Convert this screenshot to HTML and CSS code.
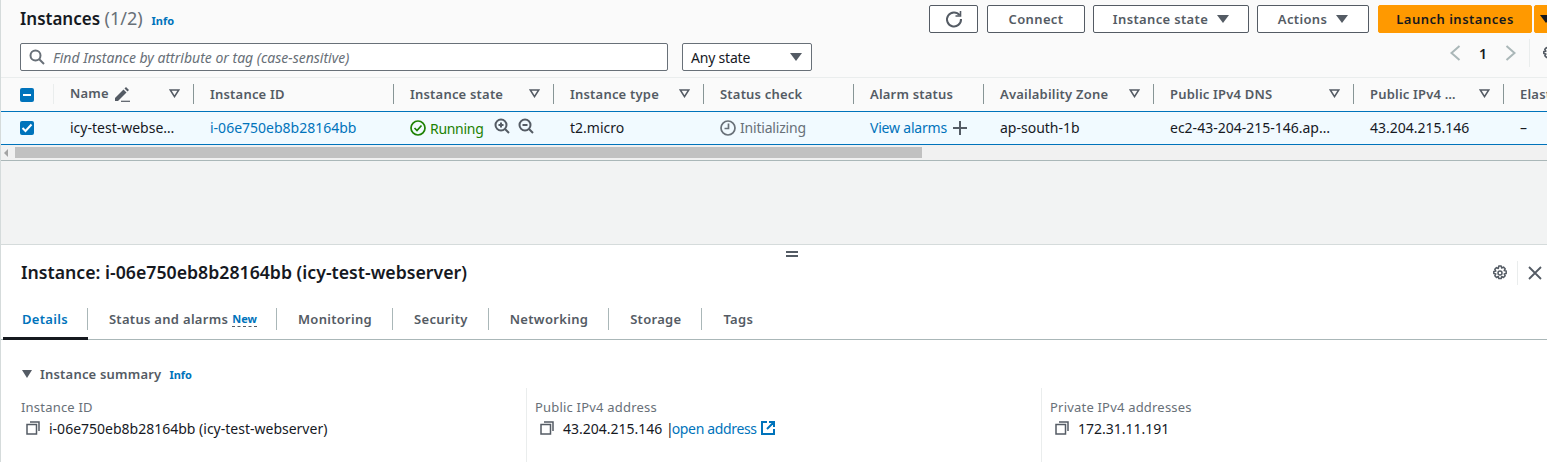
FILE: index.html
```html
<!DOCTYPE html>
<html>
<head>
<meta charset="UTF-8">
<title>Instances</title>
<link rel="stylesheet" href="styles.css">
</head>
<body>
<div class="top">
	<div class="toolbar">
		<div class="heading">
			<h1>Instances <span class="count">(1/2)</span></h1>
			<a class="info">Info</a>
		</div>
		<div class="actions">
			<button class="btn btn-refresh"><svg width="20" height="20" viewBox="0 0 20 20" fill="none" stroke="#545b64" stroke-width="2"><path d="M15.6 6.2A7 7 0 1 0 17 10"/><path d="M16.5 2v5h-5" stroke-width="1.6"/></svg></button>
			<button class="btn btn-connect">Connect</button>
			<button class="btn btn-state">Instance state <span class="caret"></span></button>
			<button class="btn btn-actions">Actions <span class="caret"></span></button>
			<button class="btn btn-launch">Launch instances</button>
			<button class="btn btn-launch-more"><span class="caret caret-dark"></span></button>
		</div>
	</div>
	<div class="filters">
		<div class="search">
			<svg width="16" height="16" viewBox="0 0 16 16" fill="none" stroke="#687078" stroke-width="2"><circle cx="6.5" cy="6.5" r="5"/><path d="M10 10l5 5"/></svg>
			<span>Find Instance by attribute or tag (case-sensitive)</span>
		</div>
		<div class="select"><span class="select-text">Any state</span> <span class="caret"></span></div>
		<div class="pager">
			<svg width="12" height="16" viewBox="0 0 12 16" fill="none" stroke="#aab7b8" stroke-width="2"><path d="M10.500 1L2.500 8l8 7"/></svg>
			<b>1</b>
			<svg width="12" height="16" viewBox="0 0 12 16" fill="none" stroke="#aab7b8" stroke-width="2"><path d="M2.500 1l8 7-8 7"/></svg>
			<i class="pager-sep"></i>
			<svg class="pager-gear" width="16" height="16" viewBox="0 0 16 16" fill="none" stroke="#545b64" stroke-width="1.600" stroke-linejoin="round"><circle cx="8" cy="8" r="2"/><path d="M6.800 1h2.400l.5 2 1.800-.9 1.700 1.700-1 1.800 2 .5v2.400l-2 .5 1 1.800-1.700 1.700-1.800-1-.5 2H6.800l-.5-2-1.800 1-1.700-1.700 1-1.800-2-.5V6.600l2-.5-1-1.800 1.700-1.700 1.800.9z"/></svg>
		</div>
	</div>
	<div class="table">
		<div class="row row-head">
			<div class="cell cell-check"><span class="check"><i class="dash"></i></span></div>
			<div class="cell"><span class="name-text">Name</span> <svg class="pencil" width="16" height="16" viewBox="0 0 16 16"><path d="M1 12L9.500 3.500 12.500 6.500 4 15H1z" fill="#545b64"/><path d="M10.500 2.500l1.500-1.500 3 3-1.500 1.500z" fill="#545b64"/><path d="M7 15.300h9" stroke="#545b64" stroke-width="1.200"/></svg><svg class="sort" width="11" height="9" viewBox="0 0 11 9" fill="none" stroke="#545b64" stroke-width="1.600"><path d="M1.200 1h8.600L5.500 7.600z"/></svg></div>
			<div class="cell">Instance ID</div>
			<div class="cell">Instance state<svg class="sort" width="11" height="9" viewBox="0 0 11 9" fill="none" stroke="#545b64" stroke-width="1.600"><path d="M1.200 1h8.600L5.500 7.600z"/></svg></div>
			<div class="cell">Instance type<svg class="sort" width="11" height="9" viewBox="0 0 11 9" fill="none" stroke="#545b64" stroke-width="1.600"><path d="M1.200 1h8.600L5.500 7.600z"/></svg></div>
			<div class="cell">Status check</div>
			<div class="cell">Alarm status</div>
			<div class="cell">Availability Zone<svg class="sort" width="11" height="9" viewBox="0 0 11 9" fill="none" stroke="#545b64" stroke-width="1.600"><path d="M1.200 1h8.600L5.500 7.600z"/></svg></div>
			<div class="cell">Public IPv4 DNS<svg class="sort" width="11" height="9" viewBox="0 0 11 9" fill="none" stroke="#545b64" stroke-width="1.600"><path d="M1.200 1h8.600L5.500 7.600z"/></svg></div>
			<div class="cell">Public IPv4 …<svg class="sort" width="11" height="9" viewBox="0 0 11 9" fill="none" stroke="#545b64" stroke-width="1.600"><path d="M1.200 1h8.600L5.500 7.600z"/></svg></div>
			<div class="cell">Elastic IP</div>
		</div>
		<div class="row row-body">
			<div class="cell cell-check"><span class="check"><svg width="14" height="14" viewBox="0 0 14 14" fill="none" stroke="#fff" stroke-width="2"><path d="M2.500 7l3 3 6-6.500"/></svg></span></div>
			<div class="cell">icy-test-webse…</div>
			<div class="cell"><a>i-06e750eb8b28164bb</a></div>
			<div class="cell cell-state">
				<svg width="16" height="16" viewBox="0 0 16 16" fill="none" stroke="#1d8102" stroke-width="1.700"><circle cx="8" cy="8" r="7"/><path d="M4.500 8l2.500 2.500 4.500-5"/></svg>
				<span class="running">Running</span>
				<svg class="zoom-icon" width="16" height="16" viewBox="0 0 16 16" fill="none" stroke="#545b64" stroke-width="2"><circle cx="7" cy="7" r="5.500"/><path d="M11 11l4 4M4.500 7h5M7 4.500v5"/></svg>
				<svg class="zoom-icon" width="16" height="16" viewBox="0 0 16 16" fill="none" stroke="#545b64" stroke-width="2"><circle cx="7" cy="7" r="5.500"/><path d="M11 11l4 4M4.500 7h5"/></svg>
			</div>
			<div class="cell">t2.micro</div>
			<div class="cell cell-muted">
				<svg width="16" height="16" viewBox="0 0 16 16" fill="none" stroke="#687078" stroke-width="1.700"><circle cx="8" cy="8" r="7"/><path d="M8.500 3.500v5H4.500"/></svg>
				<span class="muted-text">Initializing</span>
			</div>
			<div class="cell"><a class="alarms">View alarms</a><svg class="plus" width="14" height="14" viewBox="0 0 14 14" stroke="#545b64" stroke-width="2"><path d="M7 0v14M0 7h14"/></svg></div>
			<div class="cell">ap-south-1b</div>
			<div class="cell">ec2-43-204-215-146.ap…</div>
			<div class="cell">43.204.215.146</div>
			<div class="cell">–</div>
		</div>
	</div>
	<div class="scrollbar">
		<span class="scroll-arrow"></span>
		<div class="scroll-thumb"></div>
	</div>
</div>

<div class="gap"></div>

<div class="panel">
	<div class="handle"></div>
	<div class="panel-head">
		<h2>Instance: i-06e750eb8b28164bb (icy-test-webserver)</h2>
		<div class="panel-tools">
			<svg width="16" height="16" viewBox="0 0 16 16" fill="none" stroke="#545b64" stroke-width="1.500" stroke-linejoin="round"><circle cx="8" cy="8" r="2"/><path d="M6.800 1h2.400l.5 2 1.800-.9 1.700 1.700-1 1.800 2 .5v2.400l-2 .5 1 1.800-1.700 1.700-1.800-1-.5 2H6.800l-.5-2-1.800 1-1.700-1.700 1-1.800-2-.5V6.600l2-.5-1-1.800 1.700-1.700 1.800.9z"/></svg>
			<i class="tools-sep"></i>
			<svg width="14" height="14" viewBox="0 0 14 14" fill="none" stroke="#545b64" stroke-width="1.800"><path d="M1 1l12 12M13 1L1 13"/></svg>
		</div>
	</div>
	<div class="tabs">
		<div class="tab tab-active">Details</div>
		<div class="tab tab-status">Status and alarms <span class="new">New</span></div>
		<div class="tab">Monitoring</div>
		<div class="tab">Security</div>
		<div class="tab">Networking</div>
		<div class="tab">Storage</div>
		<div class="tab tab-last">Tags</div>
	</div>
	<div class="summary-title">
		<span class="caret"></span>
		<b>Instance summary</b>
		<a class="info">Info</a>
	</div>
	<div class="summary">
		<div class="field">
			<div class="label">Instance ID</div>
			<div class="value"><svg width="14" height="14" viewBox="0 0 14 14" fill="none" stroke="#545b64" stroke-width="1.500"><rect x="1" y="3.500" width="9.500" height="9.500"/><path d="M4 1h9v9"/></svg>i-06e750eb8b28164bb (icy-test-webserver)</div>
		</div>
		<div class="field">
			<div class="label">Public IPv4 address</div>
			<div class="value"><svg width="14" height="14" viewBox="0 0 14 14" fill="none" stroke="#545b64" stroke-width="1.500"><rect x="1" y="3.500" width="9.500" height="9.500"/><path d="M4 1h9v9"/></svg><span>43.204.215.146 |<a class="open-link">open address</a></span><svg class="external" width="14" height="14" viewBox="0 0 14 14" fill="none" stroke="#0073bb" stroke-width="2"><path d="M6 1H1v12h12V8M8 1h5v5M13 1L6 8"/></svg></div>
		</div>
		<div class="field">
			<div class="label">Private IPv4 addresses</div>
			<div class="value"><svg width="14" height="14" viewBox="0 0 14 14" fill="none" stroke="#545b64" stroke-width="1.500"><rect x="1" y="3.500" width="9.500" height="9.500"/><path d="M4 1h9v9"/></svg>172.31.11.191</div>
		</div>
	</div>
</div>
</body>
</html>
```

FILE: styles.css
```css
*
{
	box-sizing: border-box;
}

html, body
{
	margin: 0;
	height: 462px;
	overflow: hidden;
}

body
{
	font-family: "Noto Sans", sans-serif;
	font-size: 14px;
	color: #16191f;
	background-color: #ffffff;
	border-left: 1px solid #d5dbdb;
}

a
{
	color: #0073bb;
}

.top
{
	height: 161px;
	background-color: #fafafa;
	border-bottom: 1px solid #aab7b8;
}

.toolbar
{
	height: 38px;
	padding: 5px 0 0 19px;
	display: flex;
	justify-content: space-between;
}

.heading
{
	display: flex;
	align-items: baseline;
}

h1
{
	margin: 0;
	font-size: 17px;
	line-height: 27px;
	font-weight: 600;
}

.count
{
	font-size: 18px;
	font-weight: 400;
	color: #687078;
}

.info
{
	font-size: 11px;
	font-weight: 700;
	margin-left: 9px;
}

.actions
{
	display: flex;
	width: 618px;
	flex: none;
}

.btn
{
	height: 28px;
	font-family: inherit;
	font-size: 13px;
	font-weight: 600;
	letter-spacing: 0.35px;
	color: #545b64;
	background-color: #ffffff;
	border: 1px solid #545b64;
	border-radius: 2px;
	padding: 0;
	display: flex;
	align-items: center;
	justify-content: center;
	flex: none;
}

.btn-refresh
{
	width: 49px;
	margin-right: 9px;
}

.btn-connect
{
	width: 98px;
	margin-right: 8px;
}

.btn-state
{
	width: 156px;
	margin-right: 8px;
}

.btn-actions
{
	width: 112px;
	margin-right: 9px;
}

.btn-launch
{
	width: 154px;
	margin-right: 2px;
	letter-spacing: 0.5px;
	color: #16191f;
	background-color: #ff9900;
	border-color: #ff9900;
}

.btn-launch-more
{
	width: 20px;
	background-color: #ff9900;
	border-color: #ff9900;
	justify-content: flex-start;
	padding-left: 5px;
}

.caret
{
	display: inline-block;
	flex: none;
	width: 0;
	height: 0;
	border-left: 6px solid transparent;
	border-right: 6px solid transparent;
	border-top: 8px solid #545b64;
	margin-left: 9px;
}

.caret-dark
{
	margin-left: 0;
	border-top-color: #16191f;
}

.filters
{
	height: 39px;
	padding: 5px 0 0 19px;
	display: flex;
	align-items: flex-start;
}

.search
{
	flex: none;
	width: 648px;
	height: 28px;
	background-color: #ffffff;
	border: 1px solid #687078;
	border-radius: 2px;
	padding-left: 8px;
	display: flex;
	align-items: center;
	gap: 8px;
	font-style: italic;
	color: #687078;
}

.select
{
	flex: none;
	width: 130px;
	height: 28px;
	margin-left: 14px;
	background-color: #ffffff;
	border: 1px solid #687078;
	border-radius: 2px;
	padding: 0 9px 0 8px;
	display: flex;
	align-items: center;
	justify-content: space-between;
}

.select-text
{
	letter-spacing: -0.2px;
}

.pager
{
	flex: none;
	margin-left: 637px;
	height: 20px;
	display: flex;
	align-items: center;
}

.pager b
{
	margin: 0 17px 0 18px;
	font-weight: 600;
}

.pager-sep
{
	width: 1px;
	height: 28px;
	margin: 0 12px 0 13px;
	background-color: #eaeded;
}

.pager-gear
{
	flex: none;
}

.table
{
	border-top: 1px solid #eaeded;
	overflow: hidden;
}

.row
{
	display: grid;
	grid-template-columns: 52px 140px 200px 160px 150px 150px 130px 170px 200px 150px 200px;
	width: 1700px;
}

.row-head
{
	height: 33px;
	font-size: 13px;
	font-weight: 600;
	letter-spacing: 0.2px;
	color: #545b64;
}

.row-body
{
	height: 34px;
	background-color: #f1faff;
	border-top: 1px solid #0073bb;
	border-bottom: 1px solid #0073bb;
}

.cell
{
	padding: 0 13px 0 17px;
	display: flex;
	align-items: center;
	white-space: nowrap;
	position: relative;
}

.row-head .cell
{
	padding-bottom: 2px;
}

.row-body .cell
{
	padding-bottom: 1px;
}

.row-head .cell::before
{
	content: "";
	position: absolute;
	left: 0;
	top: 6px;
	height: 20px;
	width: 1px;
	background-color: #879596;
}

.row-head .cell-check::before
{
	display: none;
}

.row-head .cell:nth-child(2)::before
{
	background-color: #eaeded;
}

.row-head .cell-check, .row-body .cell-check
{
	padding: 0 0 0 19px;
}

.check
{
	width: 14px;
	height: 14px;
	border-radius: 2px;
	background-color: #0073bb;
	display: flex;
	align-items: center;
	justify-content: center;
}

.dash
{
	width: 8px;
	height: 2px;
	background-color: #ffffff;
}

.name-text
{
	margin-top: -1px;
}

.pencil
{
	margin-left: 5px;
}

.sort
{
	margin-left: auto;
	flex: none;
}

.cell-state svg:first-child
{
	margin-right: 4px;
}

.running
{
	color: #1d8102;
	letter-spacing: -0.3px;
	margin-top: 1px;
}

.zoom-icon
{
	margin-left: 11px;
	margin-top: -3px;
}

.zoom-icon + .zoom-icon
{
	margin-left: 8px;
}

.cell-muted
{
	color: #687078;
	gap: 4px;
}

.muted-text
{
	letter-spacing: -0.2px;
}

.alarms
{
	letter-spacing: -0.2px;
}

.plus
{
	margin-left: 6px;
}

.scrollbar
{
	height: 15px;
	background-color: #f1f1f1;
	display: flex;
	align-items: center;
	padding-left: 3px;
}

.scroll-arrow
{
	width: 0;
	height: 0;
	border-top: 4px solid transparent;
	border-bottom: 4px solid transparent;
	border-right: 4px solid #a3a3a3;
}

.scroll-thumb
{
	width: 907px;
	height: 11px;
	margin-left: 7px;
	background-color: #c1c1c1;
}

.gap
{
	height: 83px;
	background-color: #f2f3f3;
}

.panel
{
	height: 218px;
	border-top: 1px solid #d5dbdb;
	position: relative;
}

.handle
{
	position: absolute;
	left: 785px;
	top: 6px;
	width: 12px;
	height: 6px;
	border-top: 2px solid #545b64;
	border-bottom: 2px solid #545b64;
}

.panel-head
{
	height: 63px;
	padding: 15px 4px 0 20px;
	display: flex;
	justify-content: space-between;
}

h2
{
	margin: 0;
	font-size: 17.7px;
	line-height: 24px;
	font-weight: 600;
}

.panel-tools
{
	display: flex;
	align-items: center;
	height: 24px;
	margin-top: 1px;
	padding-right: 1px;
}

.tools-sep
{
	width: 1px;
	height: 24px;
	margin: 0 10px 0 9px;
	background-color: #eaeded;
}

.tabs
{
	height: 32px;
	padding-left: 2px;
	display: flex;
	border-bottom: 1px solid #aab7b8;
}

.tab
{
	height: 31px;
	padding: 0 21px 9px 21px;
	display: flex;
	align-items: center;
	font-size: 13px;
	font-weight: 600;
	letter-spacing: 0.3px;
	color: #545b64;
	position: relative;
}

.tab::after
{
	content: "";
	position: absolute;
	right: 0;
	top: 0;
	height: 22px;
	width: 1px;
	background-color: #aab7b8;
}

.tab-last::after
{
	display: none;
}

.tab-active
{
	color: #0073bb;
	border-bottom: 3px solid #16191f;
	height: 32px;
	padding: 0 20px 7px 19px;
}

.tab-status
{
	padding-right: 20px;
}

.new
{
	font-size: 11px;
	font-weight: 700;
	letter-spacing: 0;
	color: #0073bb;
	border-bottom: 1px dashed #545b64;
	margin-left: 4px;
	line-height: 14px;
}

.summary-title
{
	height: 48px;
	padding: 20px 0 0 21px;
	display: flex;
	align-items: center;
	font-size: 13px;
}

.summary-title .caret
{
	margin-left: 0;
	border-left-width: 5px;
	border-right-width: 5px;
	margin-right: 8px;
}

.summary-title b
{
	font-weight: 600;
	letter-spacing: 0.2px;
	color: #545b64;
}

.summary-title .info
{
	margin-left: 8px;
}

.summary
{
	display: grid;
	grid-template-columns: 525px 515px 505px;
	height: 74px;
}

.field
{
	padding: 9px 0 0 8px;
	border-left: 1px solid #eaeded;
}

.field:first-child
{
	padding-left: 20px;
	border-left: none;
}

.label
{
	color: #687078;
	font-size: 13px;
	letter-spacing: 0.2px;
	height: 20px;
	line-height: 20px;
}

.value
{
	margin: 0 0 0 5px;
	display: flex;
	align-items: center;
	gap: 9px;
	height: 22px;
}

.open-link
{
	margin-left: -2px;
	letter-spacing: -0.35px;
}

.external
{
	margin-left: -5px;
}
```
